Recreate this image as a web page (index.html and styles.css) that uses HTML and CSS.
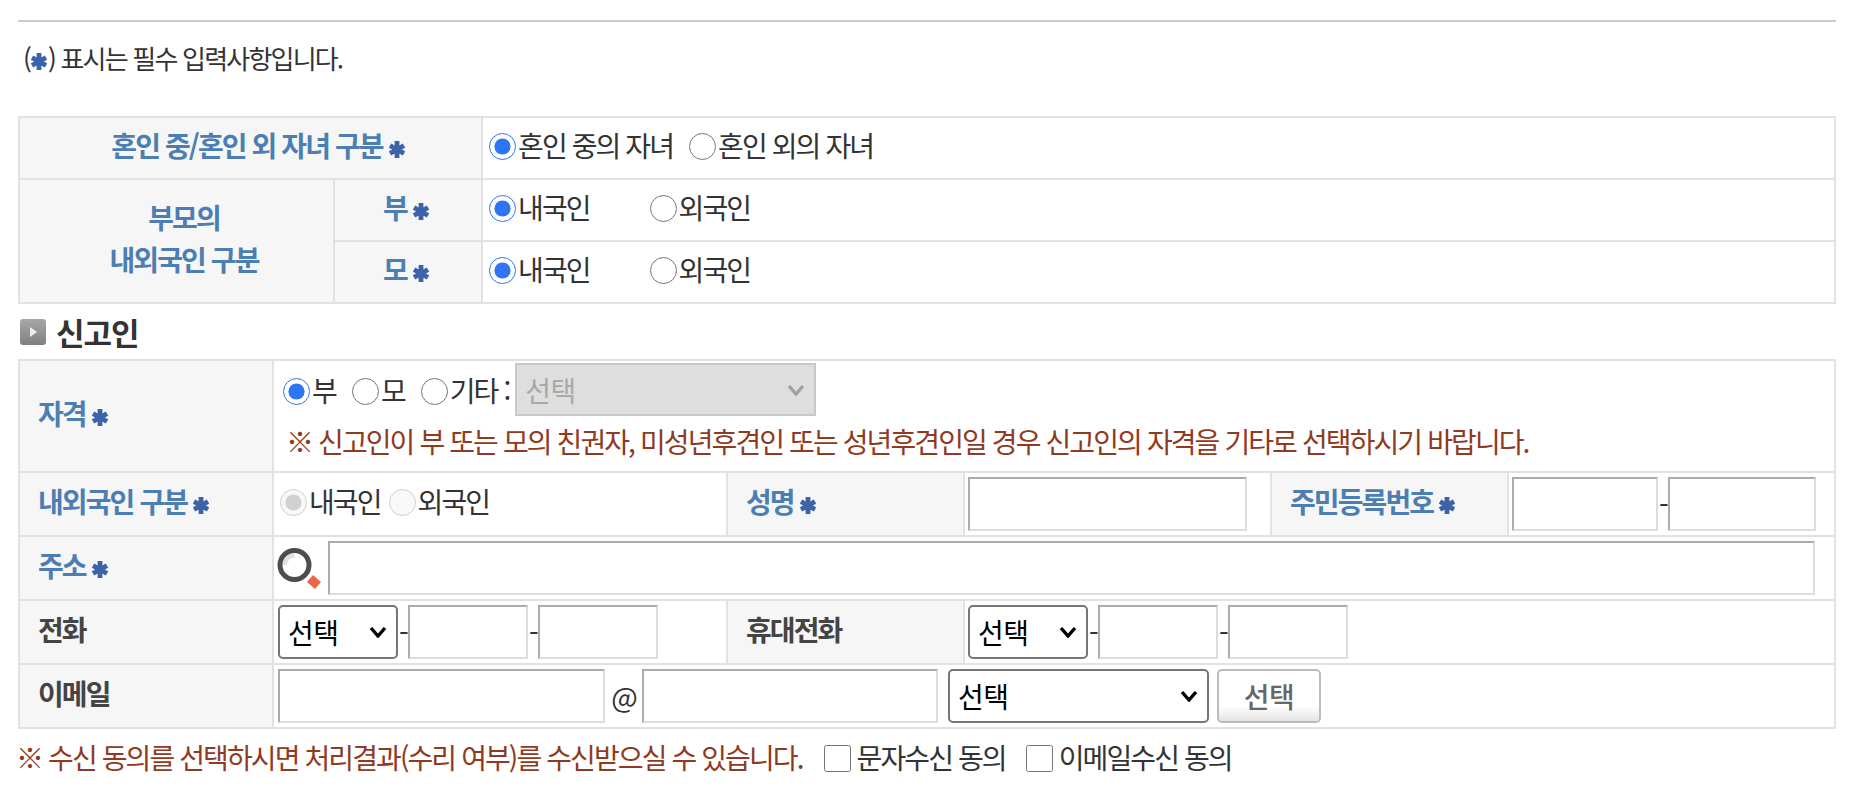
FILE: index.html
```html
<!DOCTYPE html>
<html lang="ko">
<head>
<meta charset="utf-8">
<title>출생신고</title>
<link rel="stylesheet" href="styles.css">
</head>
<body>
<div class="page">
  <hr class="rule">
  <p class="note">(<svg class="star star-note" viewBox="0 0 16 17"><path d="M8 0v17M1 4.500l14 8M15 4.500l-14 8"/></svg>) 표시는 필수 입력사항입니다.</p>

  <table class="grid grid-a">
    <colgroup><col class="a1"><col class="a2"><col></colgroup>
    <tr>
      <th colspan="2" class="blue off-center">혼인 중/혼인 외 자녀 구분 <svg class="star" viewBox="0 0 16 17"><path d="M8 0v17M1 4.500l14 8M15 4.500l-14 8"/></svg></th>
      <td class="raise"><div class="line">
        <label class="opt gap-s"><input type="radio" name="m" checked>혼인 중의 자녀</label>
        <label class="opt"><input type="radio" name="m">혼인 외의 자녀</label>
      </div></td>
    </tr>
    <tr>
      <th rowspan="2" class="blue tall off-center">부모의<br>내외국인 구분</th>
      <th class="blue parent">부 <svg class="star" viewBox="0 0 16 17"><path d="M8 0v17M1 4.500l14 8M15 4.500l-14 8"/></svg></th>
      <td class="raise"><div class="line">
        <label class="opt gap-l"><input type="radio" name="f" checked>내국인</label>
        <label class="opt"><input type="radio" name="f">외국인</label>
      </div></td>
    </tr>
    <tr>
      <th class="blue parent">모 <svg class="star" viewBox="0 0 16 17"><path d="M8 0v17M1 4.500l14 8M15 4.500l-14 8"/></svg></th>
      <td class="raise"><div class="line">
        <label class="opt gap-l"><input type="radio" name="o" checked>내국인</label>
        <label class="opt"><input type="radio" name="o">외국인</label>
      </div></td>
    </tr>
  </table>

  <h2 class="section">
    <svg class="section-icon" viewBox="0 0 26 26"><defs><linearGradient id="g" x1="0" y1="0" x2="0" y2="1"><stop offset="0" stop-color="#a8a8a8"/><stop offset="1" stop-color="#808080"/></linearGradient></defs><rect width="26" height="26" rx="3" fill="url(#g)"/><path d="M10 8l7 5-7 5z" fill="#eee"/></svg>
    신고인
  </h2>

  <table class="grid grid-b">
    <colgroup><col class="b1"><col class="b2"><col class="b3"><col class="b4"><col class="b5"><col></colgroup>
    <tr class="row-tall">
      <th class="blue left">자격 <svg class="star" viewBox="0 0 16 17"><path d="M8 0v17M1 4.500l14 8M15 4.500l-14 8"/></svg></th>
      <td colspan="5" class="qual">
        <div class="line">
          <label class="opt gap-q"><input type="radio" name="q" checked>부</label>
          <label class="opt gap-q"><input type="radio" name="q">모</label>
          <label class="opt"><input type="radio" name="q">기타 :</label>
          <select class="sel sel-off" disabled><option>선택</option></select>
        </div>
        <p class="warn warn-in">※ 신고인이 부 또는 모의 친권자, 미성년후견인 또는 성년후견인일 경우 신고인의 자격을 기타로 선택하시기 바랍니다.</p>
      </td>
    </tr>
    <tr>
      <th class="blue left">내외국인 구분 <svg class="star" viewBox="0 0 16 17"><path d="M8 0v17M1 4.500l14 8M15 4.500l-14 8"/></svg></th>
      <td class="raise"><div class="line">
        <label class="opt gap-d"><input type="radio" name="n" checked disabled>내국인</label>
        <label class="opt"><input type="radio" name="n" disabled>외국인</label>
      </div></td>
      <th class="blue left">성명 <svg class="star" viewBox="0 0 16 17"><path d="M8 0v17M1 4.500l14 8M15 4.500l-14 8"/></svg></th>
      <td class="snug"><div class="line"><input class="inp w-name" type="text"></div></td>
      <th class="blue left">주민등록번호 <svg class="star" viewBox="0 0 16 17"><path d="M8 0v17M1 4.500l14 8M15 4.500l-14 8"/></svg></th>
      <td class="snug"><div class="line tight"><input class="inp w-rrn1" type="text"><span class="dash">-</span><input class="inp w-rrn2" type="text"></div></td>
    </tr>
    <tr>
      <th class="blue left">주소 <svg class="star" viewBox="0 0 16 17"><path d="M8 0v17M1 4.500l14 8M15 4.500l-14 8"/></svg></th>
      <td colspan="5" class="addr-cell"><div class="line addr">
        <svg class="magnifier" viewBox="0 0 44 41"><circle cx="17.500" cy="17" r="14.500" fill="#fff" stroke="#4d4d4d" stroke-width="5"/><path d="M8 17a9.500 9.500 0 0 1 9.500-9.500" fill="none" stroke="#e0e0e0" stroke-width="4"/><path d="M36 27l8 7-6 7-8-7z" fill="#e8674a"/></svg>
        <input class="inp w-addr" type="text">
      </div></td>
    </tr>
    <tr>
      <th class="dark left">전화</th>
      <td><div class="line tight">
        <select class="sel w-sel"><option>선택</option></select><span class="dash">-</span><input class="inp w-tel" type="text"><span class="dash">-</span><input class="inp w-tel" type="text">
      </div></td>
      <th class="dark left">휴대전화</th>
      <td colspan="3" class="snug"><div class="line tight">
        <select class="sel w-sel"><option>선택</option></select><span class="dash">-</span><input class="inp w-tel" type="text"><span class="dash">-</span><input class="inp w-tel" type="text">
      </div></td>
    </tr>
    <tr>
      <th class="dark left">이메일</th>
      <td colspan="5"><div class="line mail">
        <input class="inp w-mail1" type="text">
        <span class="at">@</span>
        <input class="inp w-mail2" type="text">
        <select class="sel w-mail3"><option>선택</option></select>
        <button class="btn" type="button">선택</button>
      </div></td>
    </tr>
  </table>

  <div class="consent">
    <p class="warn warn-out">※ 수신 동의를 선택하시면 처리결과(수리 여부)를 수신받으실 수 있습니다.</p>
    <label class="opt"><input type="checkbox">문자수신 동의</label>
    <label class="opt"><input type="checkbox">이메일수신 동의</label>
  </div>
</div>
</body>
</html>
```
FILE: styles.css
```css
* { box-sizing: border-box; }
html, body { margin: 0; padding: 0; background: #fff; }
body {
  font-family: "Noto Sans CJK KR", "Noto Sans", sans-serif;
  font-size: 28px;
  letter-spacing: -1.9px;
  color: #333;
}
.page { padding: 20px 18px 0; }
.rule { margin: 0; border: 0; height: 2px; background: #ccc; }
.note {
  margin: 0;
  height: 94px;
  padding: 19px 5px 0;
  font-size: 26px;
  line-height: 34px;
  letter-spacing: -1.8px;
}
.grid {
  width: 100%;
  table-layout: fixed;
  border-collapse: collapse;
}
.grid th, .grid td { border: 2px solid #e2e2e2; padding: 0 3px 0 4px; }
.grid td.snug { padding-left: 3px; }
.grid td.addr-cell { padding-left: 3px; }
.grid th { background: #f6f6f6; font-weight: 700; text-align: center; padding-bottom: 7px; }
.grid th.off-center { padding-left: 18px; }
.grid th.parent { padding-right: 8px; }
.grid td.raise { padding-bottom: 7px; }
.grid-a tr { height: 62px; }
.grid-b tr { height: 64px; }
.grid-b .row-tall { height: 112px; }
.a1 { width: 315px; }
.a2 { width: 148px; }
.b1 { width: 254px; }
.b2 { width: 454px; }
.b3 { width: 237px; }
.b4 { width: 307px; }
.b5 { width: 237px; }
.blue { color: #4c7eb3; }
.dark { color: #444; }
.grid th.left { text-align: left; padding-left: 18px; }
.tall { line-height: 42px; }
.star {
  width: 16px; height: 17px;
  vertical-align: -1px;
  fill: none;
  stroke: #3c62a8;
  stroke-width: 4.8;
}
.star-note { margin: 0 1px; }
.line { display: flex; align-items: center; }
.tight { gap: 0; }
.dash { width: 10px; text-align: center; }
.opt { display: inline-flex; align-items: center; line-height: 34px; white-space: nowrap; }
.opt input { width: 27px; height: 27px; margin: 3px 2px 0 2px; accent-color: #2f74f5; flex: none; }
.gap-s { margin-right: 14px; }
.gap-l { margin-right: 58px; }
.gap-q { margin-right: 14px; }
.gap-d { margin-right: 6px; }
.grid td.qual { padding-bottom: 8px; padding-left: 7px; }
.sel, .inp, .btn { font-family: inherit; letter-spacing: -0.5px; height: 54px; }
.sel {
  appearance: none;
  font-size: 28px;
  color: #000;
  background: #fff url("data:image/svg+xml,%3Csvg xmlns='http://www.w3.org/2000/svg' width='18' height='12'%3E%3Cpath d='M2 2l7 8 7-8' fill='none' stroke='%23000' stroke-width='3.400'/%3E%3C/svg%3E") no-repeat right 9px center;
  border: 2px solid #767676;
  border-radius: 5px;
  padding: 0 8px;
}
.sel-off {
  width: 301px;
  margin-left: 6px;
  height: 53px;
  background: #dedede url("data:image/svg+xml,%3Csvg xmlns='http://www.w3.org/2000/svg' width='18' height='12'%3E%3Cpath d='M2 2l7 8 7-8' fill='none' stroke='%23a0a0a0' stroke-width='3.400'/%3E%3C/svg%3E") no-repeat right 9px center;
  color: #a9a9a9;
  border-color: #c8c8c8;
  border-radius: 0;
  opacity: 1;
}
.inp {
  background: #fff;
  border-style: solid;
  border-width: 2px;
  border-color: #aaa #ddd #ddd #aaa;
  padding: 0;
}
.w-name { width: 279px; }
.w-rrn1 { width: 146px; }
.w-rrn2 { width: 148px; }
.w-addr { width: 1487px; }
.w-sel { width: 120px; }
.w-tel { width: 120px; }
.w-mail1 { width: 327px; }
.w-mail2 { width: 296px; }
.w-mail3 { width: 261px; margin-left: 10px; }
.at { width: 37px; text-align: center; }
.btn {
  width: 104px;
  margin-left: 8px;
  font-size: 28px;
  font-weight: 500;
  color: #666;
  background: linear-gradient(#fff 70%, #e4e4e4);
  border: 2px solid #bbb;
  border-radius: 5px;
}
.magnifier { width: 44px; height: 41px; margin-right: 7px; flex: none; }
.section {
  margin: 0;
  height: 55px;
  display: flex;
  align-items: center;
  gap: 10px;
  padding-left: 2px;
  font-size: 31px;
  font-weight: 700;
  letter-spacing: -1px;
  color: #333;
}
.section-icon { width: 26px; height: 26px; }
.warn { margin: 0; color: #8f3a22; }
.warn-in { margin-top: 5px; padding-left: 5px; }
.warn-out { margin-left: -2px; margin-right: 1px; }
.consent { display: flex; align-items: center; gap: 18px; padding-top: 8px; }
.consent .opt input { border-radius: 5px; margin-right: 6px; }
```
